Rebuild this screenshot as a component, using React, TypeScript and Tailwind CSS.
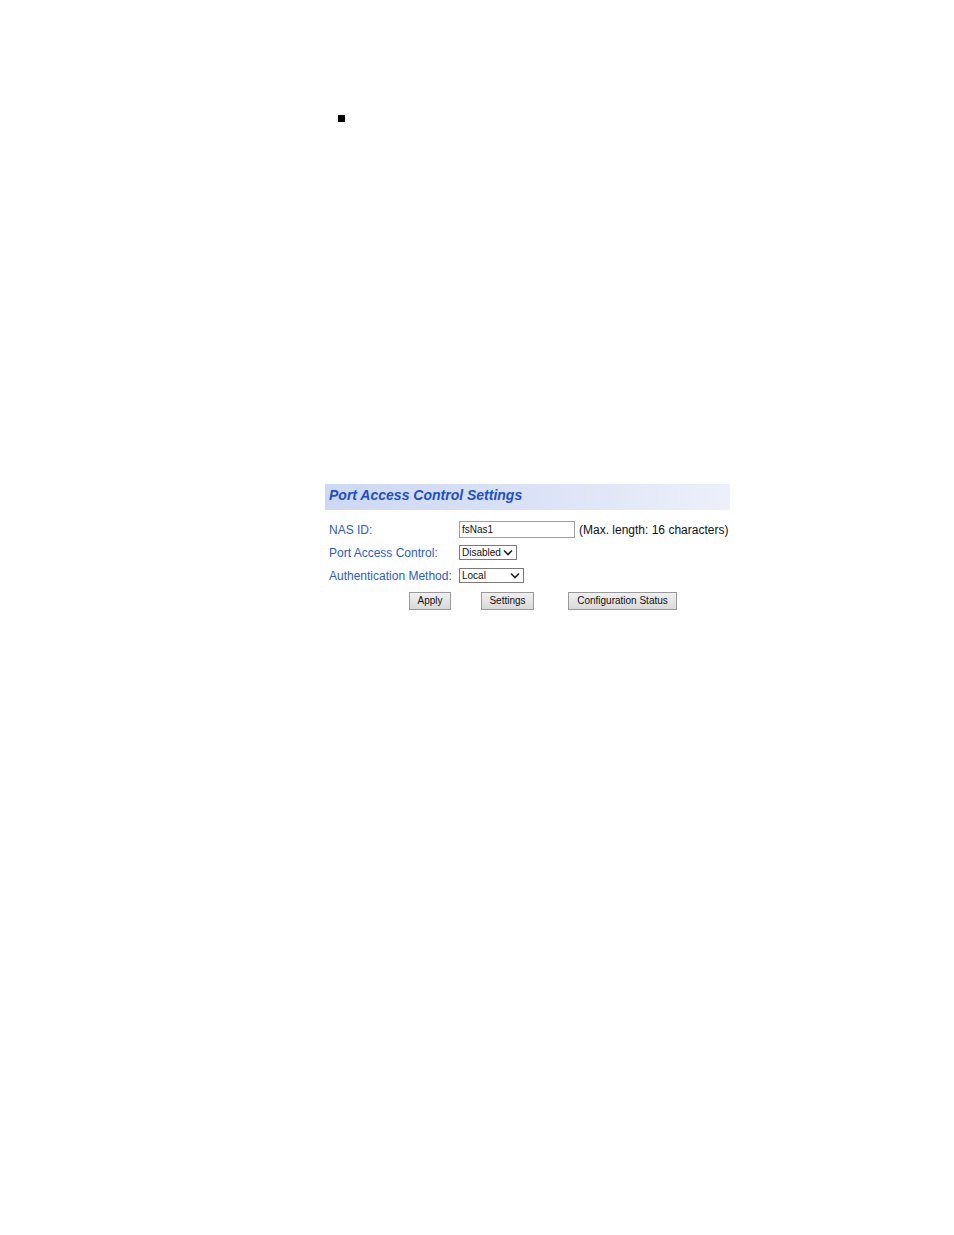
import React from 'react';

const Chevron: React.FC = () => (
  <svg width="10" height="7" viewBox="0 0 10 7" className="shrink-0">
    <path d="M1 1.5 L5 5.5 L9 1.5" fill="none" stroke="#222" strokeWidth="1.6" />
  </svg>
);

const FakeSelect: React.FC<{ value: string; width: string }> = ({ value, width }) => (
  <div
    className={`${width} h-[15px] border border-[#7a7a7a] bg-white flex items-center justify-between pl-[2px] pr-[3px] text-[10px] leading-none text-[#111]`}
  >
    <span>{value}</span>
    <Chevron />
  </div>
);

const Btn: React.FC<{ label: string; width: string }> = ({ label, width }) => (
  <button
    className={`${width} h-[18px] border border-[#9a9a9a] bg-gradient-to-b from-[#f0f0f0] to-[#d9d9d9] text-[10px] leading-none text-[#111] flex items-center justify-center`}
  >
    {label}
  </button>
);

const App: React.FC = () => {
  const label = 'w-[134px] pl-[4px] text-[12px] text-[#2a5bd0]';

  return (
    <div className="min-h-[1235px] w-[954px] bg-white" style={{ fontFamily: '"Liberation Sans", Arial, sans-serif' }}>
      <div className="pt-[115px] pl-[338px]">
        <div className="w-[7px] h-[7px] bg-black" />
      </div>

      <div className="mt-[362px] ml-[325px] w-[405px]">
        {/* Header */}
        <div className="h-[26px] bg-gradient-to-r from-[#cdd8f2] via-[#dbe2f5] to-[#edf0fa] flex items-center pl-[4px] pb-[3px]">
          <h2 className="text-[14px] font-bold italic text-[#1d4fcc]">Port Access Control Settings</h2>
        </div>

        <div className="mt-[8px]">
          <div className="h-[23px] flex items-center">
            <span className={label}>NAS ID:</span>
            <div className="w-[116px] h-[17px] border border-[#a0a0a0] bg-white flex items-center pl-[2px] text-[10px] text-[#111]">
              fsNas1
            </div>
            <span className="ml-[4px] text-[12px] text-[#111] whitespace-nowrap">(Max. length: 16 characters)</span>
          </div>

          <div className="h-[23px] flex items-center">
            <span className={label}>Port Access Control:</span>
            <FakeSelect value="Disabled" width="w-[58px]" />
          </div>

          <div className="h-[23px] flex items-center">
            <span className={label}>Authentication Method:</span>
            <FakeSelect value="Local" width="w-[65px]" />
          </div>

          <div className="h-[23px] mt-[2px] flex items-center pl-[84px]">
            <Btn label="Apply" width="w-[42px]" />
            <div className="ml-[30px]">
              <Btn label="Settings" width="w-[53px]" />
            </div>
            <div className="ml-[34px]">
              <Btn label="Configuration Status" width="w-[109px]" />
            </div>
          </div>
        </div>
      </div>
    </div>
  );
};

export default App;
